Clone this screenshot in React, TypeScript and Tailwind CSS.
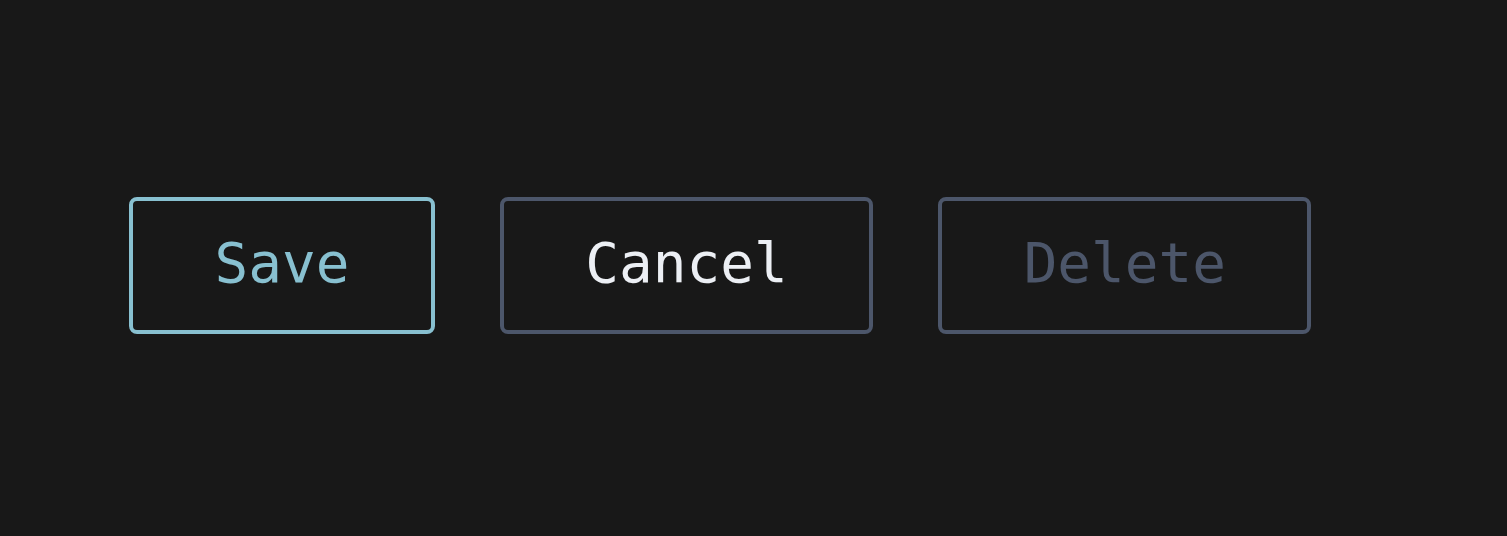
const buttons = [
  { label: "Save", className: "border-[#88c0d0] text-[#88c0d0]" },
  { label: "Cancel", className: "border-[#4c566a] text-[#eceff4]" },
  { label: "Delete", className: "border-[#4c566a] text-[#4c566a]" },
];

export default function App() {
  return (
    <div className="flex h-[536px] w-full items-center gap-[65px] bg-[#181818] pl-[129px] pb-[5px]">
      {buttons.map((b) => (
        <button
          key={b.label}
          type="button"
          className={`flex h-[137px] items-center justify-center rounded-[8px] border-[4px] bg-transparent px-[81.5px] pb-[6px] font-['DejaVu_Sans_Mono',monospace] text-[56px] leading-none ${b.className}`}
        >
          {b.label}
        </button>
      ))}
    </div>
  );
}
